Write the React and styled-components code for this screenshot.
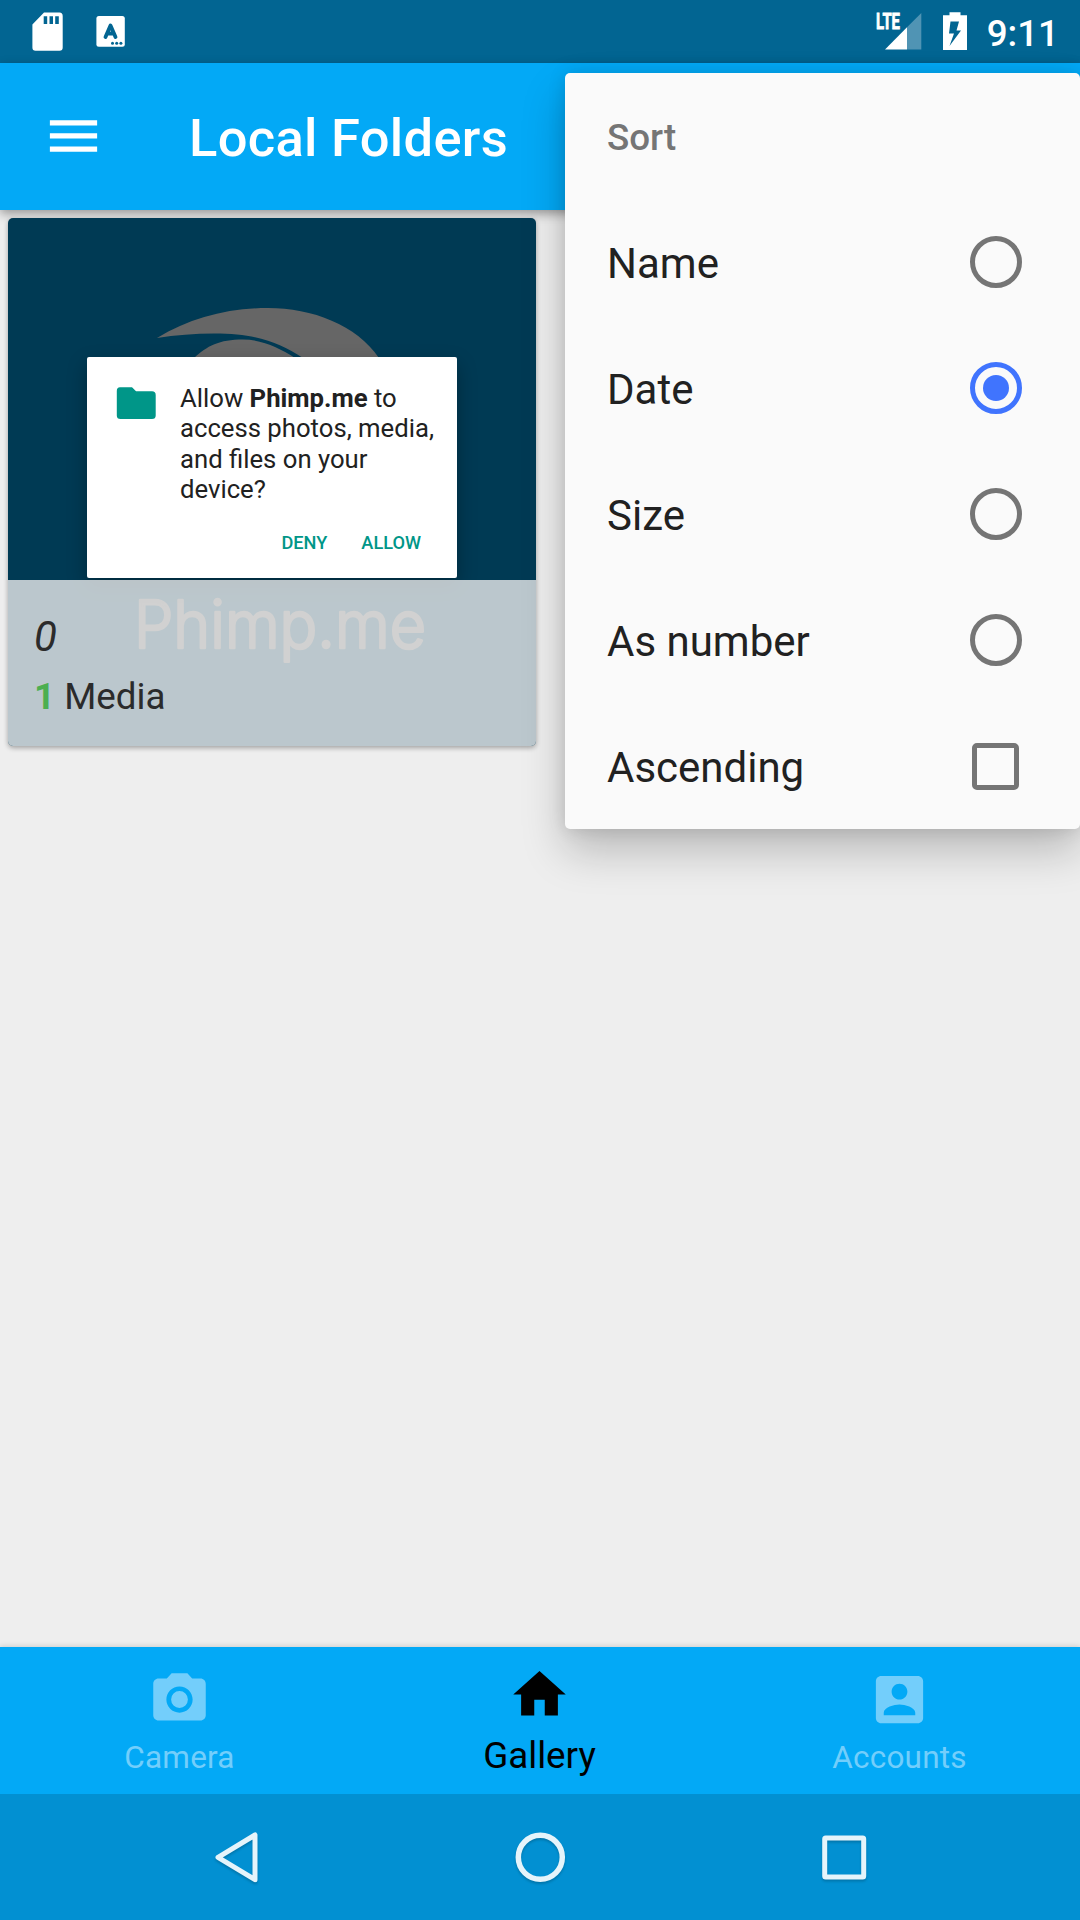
import React from "react";
import styled, { createGlobalStyle } from "styled-components";

const GlobalStyle = createGlobalStyle`
  * { box-sizing: border-box; }
  body { margin: 0; background: #eeeeee; font-family: Roboto, "Noto Sans", sans-serif; }
`;

const Screen = styled.div`
  position: relative;
  width: 1080px;
  height: 1920px;
  display: flex;
  flex-direction: column;
  overflow: hidden;
  background: #eeeeee;
`;

const StatusBar = styled.header`
  height: 63px;
  flex: none;
  display: flex;
  align-items: flex-start;
  justify-content: space-between;
  background: #026592;
  padding: 0 21px 0 32px;
`;

const StatusIcons = styled.div`
  display: flex;
  align-items: flex-start;
  height: 63px;
`;

const Clock = styled.time`
  margin-left: 19px;
  padding-top: 11px;
  color: #fff;
  font-size: 36.75px;
  font-weight: 500;
  line-height: 46px;
`;

const Toolbar = styled.div`
  height: 147px;
  flex: none;
  position: relative;
  display: flex;
  align-items: center;
  padding-left: 42px;
  background: #03a9f6;
  box-shadow: 0 4px 10px rgba(0, 0, 0, 0.36);
`;

const Title = styled.h1`
  margin: 3px 0 0 84px;
  color: #fff;
  font-size: 52.5px;
  line-height: 62px;
  font-weight: 500;
  letter-spacing: 0.3px;
`;

const Content = styled.main`
  flex: 1;
  padding: 8px;
`;

const AlbumCard = styled.article`
  position: relative;
  width: 528px;
  height: 528px;
  display: flex;
  flex-direction: column;
  justify-content: flex-end;
  border-radius: 5px;
  background: #003a54;
  box-shadow: 0 2px 5px rgba(0, 0, 0, 0.32);
`;

const Cover = styled.svg`
  position: absolute;
  inset: 0;
`;

const PermissionBox = styled.section`
  position: absolute;
  left: 79px;
  top: 139px;
  width: 370px;
  height: 221px;
  padding: 24px 0 0 29px;
  border-radius: 2px;
  background: #fff;
  box-shadow: 0 8px 20px rgba(0, 0, 0, 0.3);
`;

const PermissionBody = styled.div`
  display: flex;
  gap: 24px;
`;

const PermissionText = styled.p`
  margin: 2px 0 0;
  color: #212121;
  font-size: 25.7px;
  line-height: 30.3px;
  white-space: nowrap;
`;

const PermissionActions = styled.div`
  display: flex;
  justify-content: flex-end;
  gap: 34px;
  margin-top: 27px;
  padding-right: 36px;
  color: #009688;
  font-size: 18.2px;
  line-height: 24px;
  font-weight: 500;
`;

const Caption = styled.div`
  position: relative;
  height: 166px;
  padding: 31px 26px 0;
  border-radius: 0 0 5px 5px;
  background: rgba(238, 238, 238, 0.785);
  color: #2b2b2b;
`;

const AlbumName = styled.div`
  font-size: 42px;
  font-style: italic;
  line-height: 52px;
`;

const AlbumCount = styled.div`
  margin-top: 8px;
  font-size: 36.75px;
  line-height: 52px;

  b { color: #4caf50; }
`;

const SortMenu = styled.section`
  position: absolute;
  left: 565px;
  top: 73px;
  width: 515px;
  display: flex;
  flex-direction: column;
  border-radius: 5px;
  background: #fafafa;
  box-shadow: 0 22px 44px rgba(0, 0, 0, 0.22), 0 0 18px rgba(0, 0, 0, 0.12);
`;

const MenuHeading = styled.h2`
  margin: 0;
  height: 126px;
  padding: 3px 42px 0;
  color: #757575;
  font-size: 36.75px;
  font-weight: 500;
  line-height: 123px;
`;

const MenuRow = styled.label`
  height: 126px;
  display: flex;
  align-items: center;
  justify-content: space-between;
  padding: 0 58px 0 42px;
`;

const MenuLabel = styled.span`
  padding-top: 3px;
  color: #212121;
  font-size: 42px;
  line-height: 50px;
`;

const Radio = styled.span`
  width: 52px;
  height: 52px;
  display: grid;
  place-items: center;
  border: 5px solid ${(p) => (p.$on ? "#4074fe" : "#757575")};
  border-radius: 50%;

  &::after {
    content: "";
    width: 26px;
    height: 26px;
    border-radius: 50%;
    background: ${(p) => (p.$on ? "#4074fe" : "transparent")};
  }
`;

const Checkbox = styled.span`
  width: 47px;
  height: 47px;
  margin-right: 3px;
  border: 5px solid #757575;
  border-radius: 5px;
`;

const TabBar = styled.nav`
  height: 147px;
  flex: none;
  display: grid;
  grid-template-columns: repeat(3, 1fr);
  background: #03a9f6;
  box-shadow: 0 -1px 5px rgba(0, 0, 0, 0.14);
`;

const Tab = styled.div`
  display: flex;
  flex-direction: column;
  align-items: center;
  padding-top: ${(p) => (p.$active ? 16 : 21)}px;
  padding-right: 1px;
  color: ${(p) => (p.$active ? "#000" : "#73cefb")};
`;

const TabLabel = styled.span`
  margin-top: ${(p) => (p.$active ? 8 : 7.5)}px;
  font-size: ${(p) => (p.$active ? 36.75 : 31.5)}px;
  line-height: ${(p) => (p.$active ? 44 : 38)}px;
  letter-spacing: ${(p) => (p.$active ? 0 : 0.2)}px;
`;

const SystemNav = styled.footer`
  height: 126px;
  flex: none;
  display: flex;
  justify-content: center;
  align-items: center;
  gap: 241px;
  background: #0290d2;
`;

const NavIcon = styled.svg`
  filter: drop-shadow(0 2px 1px rgba(0, 0, 0, 0.18));
`;

const SORT_OPTIONS = ["Name", "Date", "Size", "As number"];

const TABS = [
  {
    label: "Camera",
    path: "M12 8.8a3.2 3.2 0 1 0 0 6.4 3.2 3.2 0 0 0 0-6.4zM9 2L7.17 4H4c-1.1 0-2 .9-2 2v12c0 1.1.9 2 2 2h16c1.1 0 2-.9 2-2V6c0-1.1-.9-2-2-2h-3.17L15 2H9zm3 15c-2.76 0-5-2.24-5-5s2.24-5 5-5 5 2.24 5 5-2.24 5-5 5z",
  },
  { label: "Gallery", active: true, path: "M10 20v-6h4v6h5v-8h3L12 3 2 12h3v8z" },
  {
    label: "Accounts",
    path: "M3 5v14c0 1.1.89 2 2 2h14c1.1 0 2-.9 2-2V5c0-1.1-.9-2-2-2H5c-1.11 0-2 .9-2 2zm12 4c0 1.66-1.34 3-3 3s-3-1.34-3-3 1.34-3 3-3 3 1.34 3 3zm-9 8c0-2 4-3.1 6-3.1s6 1.1 6 3.1v1H6v-1z",
  },
];

function StatusLeft() {
  return (
    <StatusIcons>
      <svg width="100" height="63" viewBox="32 0 100 63">
        <path fill="#fff" fillRule="evenodd" d="M44 12.5H59.500Q62.700 12.500 62.700 16V47.500Q62.700 50.700 59.500 50.700H35.500Q32.400 50.700 32.400 47.500V24.500ZM43.700 16.200V24H47.200V16.200ZM49.500 16.200V24H53V16.200ZM55.200 16.200V24H58.800V16.200Z" />
        <rect x="96.400" y="16" width="28.400" height="30.800" rx="2.500" fill="#fff" />
        <path d="M105.500 37L110.500 25.500L115.500 37M107.500 33.500H113.500" fill="none" stroke="#026592" strokeWidth="3.800" strokeLinecap="round" strokeLinejoin="round" />
        <g fill="#026592">
          <circle cx="112.500" cy="43.300" r="1.500" />
          <circle cx="116.700" cy="43.300" r="1.500" />
          <circle cx="120.900" cy="43.300" r="1.500" />
        </g>
      </svg>
    </StatusIcons>
  );
}

function StatusRight() {
  return (
    <StatusIcons>
      <svg width="94" height="63" viewBox="874 0 94 63">
        <text x="876" y="29.300" fill="#fff" stroke="#fff" strokeWidth="0.800" fontFamily="Roboto" fontWeight="700" fontSize="22.500" textLength="24" lengthAdjust="spacingAndGlyphs">LTE</text>
        <path d="M921.300 13V49.500H907V27.300Z" fill="#5094b4" />
        <path d="M907 27.300V49.500H885Z" fill="#fff" />
        <path fill="#fff" fillRule="evenodd" d="M949.500 12.300H960.500V15.300H967V50H943V15.300H949.500ZM950.500 21.500L949 33.500H954L949.500 46L961 30.500H956.500L959 21.500Z" />
      </svg>
      <Clock>9:11</Clock>
    </StatusIcons>
  );
}

export default function App() {
  return (
    <>
      <GlobalStyle />
      <Screen>
        <StatusBar>
          <StatusLeft />
          <StatusRight />
        </StatusBar>
        <Toolbar>
          <svg width="63" height="63" viewBox="0 0 24 24" fill="#fff">
            <path d="M3 17.800h18v-2H3v2zm0-5h18v-2H3v2zm0-7v2h18V5.800H3z" />
          </svg>
          <Title>Local Folders</Title>
        </Toolbar>
        <Content>
          <AlbumCard>
            <Cover width="528" height="528" viewBox="8 218 528 528">
              <g fill="#666">
                <path d="M157 338C190 318 228 308 268 308C312 308 357 325 379 358H303C280 343 258 333.500 214 333.500C195 333.500 175 335 157 338Z" />
                <path d="M194 358C207 346 219 339.500 243 339.500C262 339.500 280 348 295 358Z" />
                <text x="134" y="647.500" stroke="#666" strokeWidth="2.600" strokeLinejoin="round" fontFamily="Inter" fontWeight="300" fontSize="66.500" textLength="292" lengthAdjust="spacingAndGlyphs">Phimp.me</text>
              </g>
            </Cover>
            <PermissionBox>
              <PermissionBody>
                <svg width="40" height="48" viewBox="116 381 40 48">
                  <path fill="#009688" d="M120 387.300H132L136 391.300H152Q155.700 391.300 155.700 395V415.500Q155.700 419 152 419H120.500Q116.800 419 116.800 415.500V391Q116.800 387.300 120 387.300Z" />
                </svg>
                <PermissionText>
                  Allow <b>Phimp.me</b> to<br />
                  access photos, media,<br />
                  and files on your<br />
                  device?
                </PermissionText>
              </PermissionBody>
              <PermissionActions>
                <span>DENY</span>
                <span>ALLOW</span>
              </PermissionActions>
            </PermissionBox>
            <Caption>
              <AlbumName>0</AlbumName>
              <AlbumCount><b>1</b> Media</AlbumCount>
            </Caption>
          </AlbumCard>
        </Content>
        <TabBar>
          {TABS.map((tab) => (
            <Tab key={tab.label} $active={tab.active}>
              <svg width="63" height="63" viewBox="0 0 24 24" fill="currentColor">
                <path d={tab.path} />
              </svg>
              <TabLabel $active={tab.active}>{tab.label}</TabLabel>
            </Tab>
          ))}
        </TabBar>
        <SystemNav>
          <NavIcon width="63" height="63" viewBox="0 0 63 63" fill="none" stroke="#e5f4fb" strokeWidth="5" strokeLinejoin="round">
            <path d="M50 9V53.700L13 31.400Z" />
          </NavIcon>
          <NavIcon width="63" height="63" viewBox="0 0 63 63" fill="none" stroke="#e5f4fb" strokeWidth="5.500">
            <circle cx="31.300" cy="31.300" r="22" />
          </NavIcon>
          <NavIcon width="63" height="63" viewBox="0 0 63 63" fill="none" stroke="#e5f4fb" strokeWidth="5" strokeLinejoin="round">
            <rect x="11.700" y="12" width="39" height="39" rx="1" />
          </NavIcon>
        </SystemNav>
        <SortMenu>
          <MenuHeading>Sort</MenuHeading>
          {SORT_OPTIONS.map((name) => (
            <MenuRow key={name}>
              <MenuLabel>{name}</MenuLabel>
              <Radio $on={name === "Date"} />
            </MenuRow>
          ))}
          <MenuRow>
            <MenuLabel>Ascending</MenuLabel>
            <Checkbox />
          </MenuRow>
        </SortMenu>
      </Screen>
    </>
  );
}
